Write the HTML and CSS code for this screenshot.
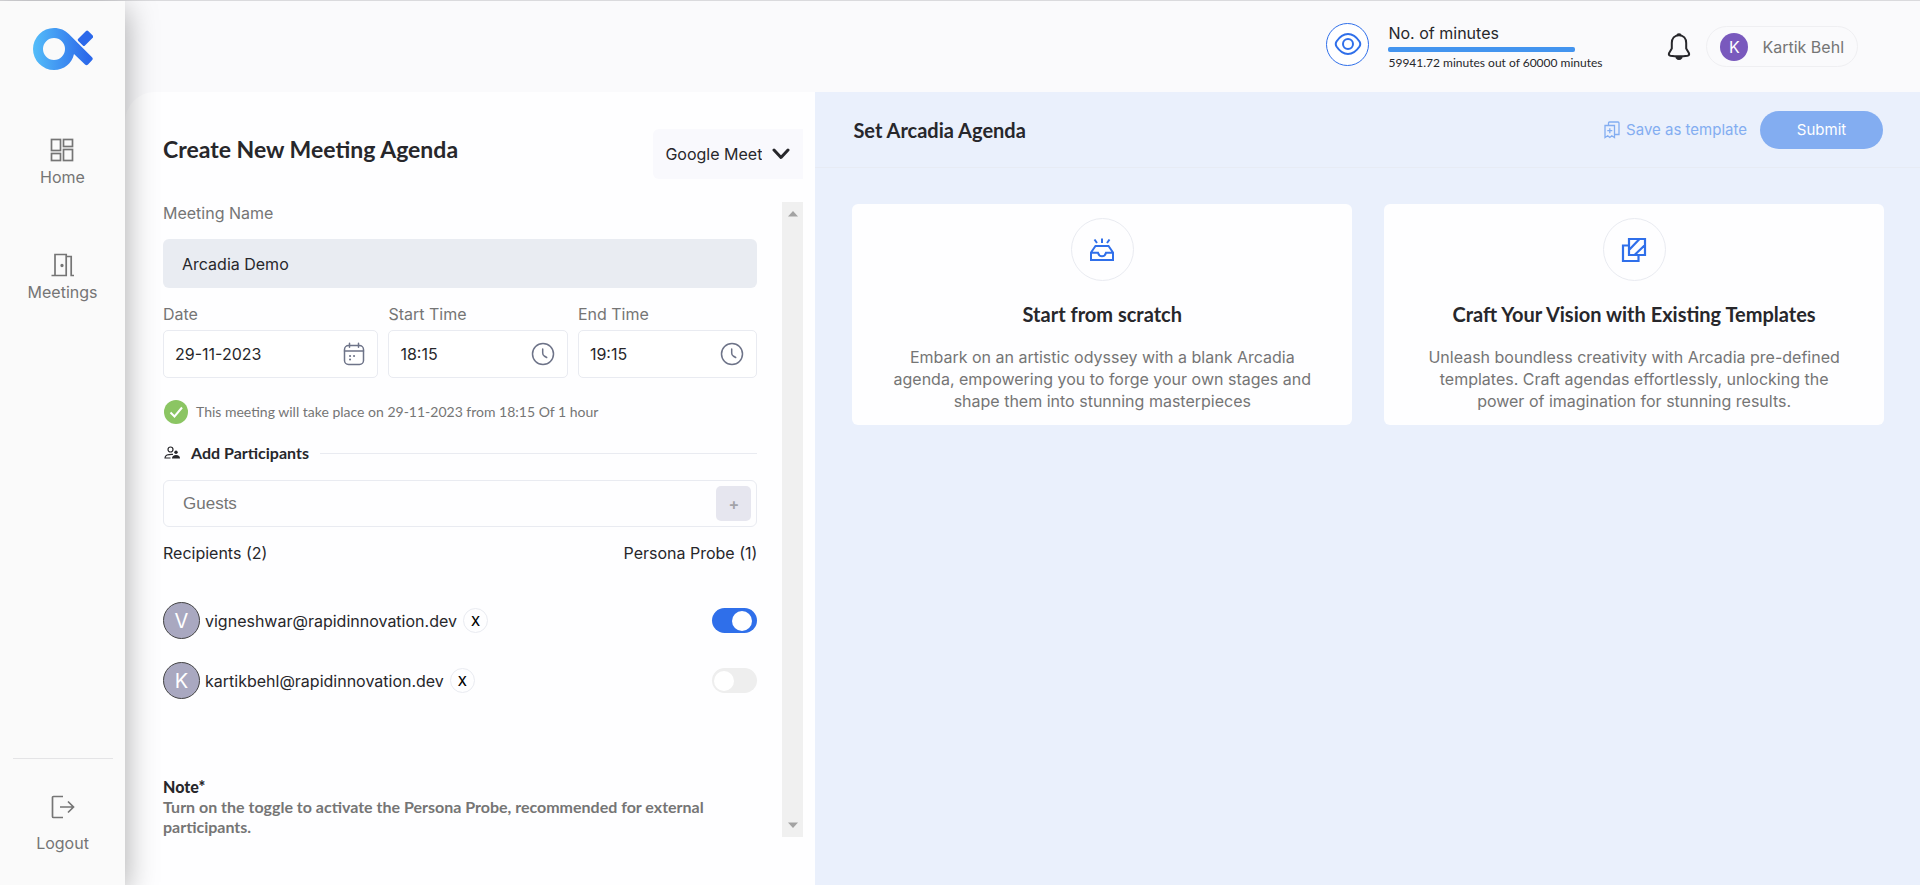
FILE: index.html
```html
<!DOCTYPE html>
<html lang="en">
<head>
<meta charset="utf-8">
<meta name="viewport" content="width=device-width, initial-scale=1">
<title>Create New Meeting Agenda</title>
<link rel="stylesheet" href="styles.css">
</head>
<body>
<div class="app">
  <nav class="sidebar" aria-label="Main">
    <a class="logo" href="#" aria-label="Arcadia">
      <svg width="60" height="42" viewBox="0 0 60 42">
        <defs>
          <linearGradient id="brand" gradientUnits="userSpaceOnUse" x1="0" y1="21" x2="56" y2="21">
            <stop offset="0" stop-color="#54bdf9"/><stop offset="1" stop-color="#2b68ea"/>
          </linearGradient>
        </defs>
        <path fill="url(#brand)" fill-rule="evenodd" d="M21 0c6.200 0 11 2.200 14.800 6L59 29.200q1.500 1.500 0 3l-4 4.200q-1.500 1.500-3 0L41 26C39 35.500 31 42 21 42A21 21 0 0 1 21 0zM21 10a11 11 0 1 0 0 22a11 11 0 0 0 0-22z"/>
        <rect x="45.500" y="5.500" width="14" height="9.500" rx="1.500" fill="#2b68ea" transform="rotate(-45 52.500 10.250)"/>
      </svg>
    </a>
    <a class="nav-item" href="#">
      <svg width="24" height="24" viewBox="0 0 24 24" fill="none" stroke="#757575" stroke-width="1.700">
        <rect x="1.500" y="1.500" width="9" height="11"/><rect x="13.500" y="1.500" width="9" height="7"/>
        <rect x="1.500" y="15.500" width="9" height="7"/><rect x="13.500" y="11.500" width="9" height="11"/>
      </svg>
      <span>Home</span>
    </a>
    <a class="nav-item" href="#">
      <svg width="24" height="24" viewBox="0 0 24 24" fill="none" stroke="#757575" stroke-width="1.700">
        <path d="M.5 22.500h14.700V1.500H4v21M15.200 3.500h5v19H23"/><circle cx="11" cy="12.500" r=".8" fill="#757575"/>
      </svg>
      <span>Meetings</span>
    </a>
    <div class="sidebar-foot">
      <a class="nav-item logout" href="#">
        <svg width="24" height="24" viewBox="0 0 24 24" fill="none" stroke="#757575" stroke-width="1.700">
          <path d="M12 1.500H2.500q-1 0-1 1v19q0 1 1 1H12M9 12h13.500M17 6.500l5.500 5.500-5.500 5.500"/>
        </svg>
        <span>Logout</span>
      </a>
    </div>
  </nav>

  <div class="main">
    <header class="topbar">
      <div class="usage">
        <span class="usage-icon">
          <svg width="28" height="28" viewBox="0 0 28 28" fill="none" stroke="#2f6fea" stroke-width="2">
            <path d="M2.500 11.500Q7.500 4 14 4t11.500 7.500q1.500 2.500 0 5Q20.500 24 14 24T2.500 16.500q-1.500-2.500 0-5z"/><circle cx="14" cy="14" r="5"/>
          </svg>
        </span>
        <div class="usage-text">
          <label class="usage-title" for="minutes">No. of minutes</label>
          <progress id="minutes" class="usage-bar" max="60000" value="59942"></progress>
          <span class="usage-detail">59941.72 minutes out of 60000 minutes</span>
        </div>
      </div>
      <button class="bell" type="button" aria-label="Notifications">
        <svg width="24" height="28" viewBox="0 0 24 28" fill="none" stroke="#27272b" stroke-width="2" stroke-linejoin="round">
          <path d="M12 2.200C7.500 2.200 4.800 5.600 4.800 10v5.500L2 20.300Q1.300 22.300 3.500 22.700Q12 24 20.500 22.700Q22.700 22.300 22 20.300L19.200 15.500V10C19.200 5.600 16.500 2.200 12 2.200z"/>
          <path d="M9.500 24.500q2.500 3 5 0z" fill="#27272b"/><path d="M10 2q2-1.500 4 0"/>
        </svg>
      </button>
      <button class="user" type="button"><span class="user-initial">K</span><span>Kartik Behl</span></button>
    </header>

    <div class="columns">
      <section class="meeting">
        <div class="meeting-head">
          <h1>Create New Meeting Agenda</h1>
          <div class="provider">
            <select aria-label="Meeting provider"><option>Google Meet</option></select>
            <svg width="18" height="12" viewBox="0 0 18 12" fill="none" stroke="#27272b" stroke-width="3" stroke-linecap="round" stroke-linejoin="round"><path d="M2 2l7 7.500L16 2"/></svg>
          </div>
        </div>
        <div class="meeting-body">
          <form class="form">
            <label class="label" for="name">Meeting Name</label>
            <input class="name-input" id="name" type="text" value="Arcadia Demo">
            <div class="when">
              <div class="field">
                <label class="label" for="date">Date</label>
                <div class="box date-box">
                  <input id="date" type="text" value="29-11-2023">
                  <svg width="22" height="24" viewBox="0 0 22 24" fill="none" stroke="#6d7388" stroke-width="1.500" stroke-linecap="round">
                    <rect x="1.500" y="3.500" width="19" height="19" rx="4"/><path d="M1.500 9h19M6.500 1.200v4M15.500 1.200v4"/><path stroke-width="2" d="M7 14h.1M11 14h.1M7 17.500h.1"/>
                  </svg>
                </div>
              </div>
              <div class="field">
                <label class="label" for="start">Start Time</label>
                <div class="box">
                  <input id="start" type="text" value="18:15">
                  <svg width="24" height="24" viewBox="0 0 24 24" fill="none" stroke="#6d7388" stroke-width="1.500" stroke-linecap="round"><circle cx="12" cy="12" r="10.500"/><path d="M11.700 7v4q0 2 1.500 3l2.500 1.500"/></svg>
                </div>
              </div>
              <div class="field">
                <label class="label" for="end">End Time</label>
                <div class="box">
                  <input id="end" type="text" value="19:15">
                  <svg width="24" height="24" viewBox="0 0 24 24" fill="none" stroke="#6d7388" stroke-width="1.500" stroke-linecap="round"><circle cx="12" cy="12" r="10.500"/><path d="M11.700 7v4q0 2 1.500 3l2.500 1.500"/></svg>
                </div>
              </div>
            </div>
            <p class="confirm">
              <svg width="24" height="24" viewBox="0 0 24 24"><circle cx="12" cy="12" r="12" fill="#8bc563"/><path d="M6.500 12.500l4 4 7.500-9" fill="none" stroke="#fff" stroke-width="2"/></svg>
              <span>This meeting will take place on 29-11-2023 from 18:15 Of 1 hour</span>
            </p>
            <h2 class="divider">
              <svg width="16" height="14" viewBox="0 0 16 14"><g fill="none" stroke="#27272b" stroke-width="1.200"><circle cx="6.500" cy="3.500" r="2.500"/><path d="M9 8.300Q1 8 1 12h5.500"/></g><circle cx="12" cy="6.300" r="1.700" fill="#27272b"/><path d="M8 12.600q0-3.600 4-3.600t4 3.600z" fill="#27272b"/></svg>
              <span>Add Participants</span>
            </h2>
            <div class="guests">
              <input type="text" placeholder="Guests" aria-label="Guests">
              <button type="button" aria-label="Add guest">+</button>
            </div>
            <div class="counts"><span>Recipients (2)</span><span>Persona Probe (1)</span></div>
            <ul class="people">
              <li>
                <span class="avatar">V</span><label for="probe-v">vigneshwar@rapidinnovation.dev</label>
                <button class="remove" type="button" aria-label="Remove vigneshwar">X</button>
                <input class="toggle" id="probe-v" type="checkbox" checked>
              </li>
              <li>
                <span class="avatar">K</span><label for="probe-k">kartikbehl@rapidinnovation.dev</label>
                <button class="remove" type="button" aria-label="Remove kartikbehl">X</button>
                <input class="toggle" id="probe-k" type="checkbox">
              </li>
            </ul>
            <p class="note"><strong>Note*</strong>Turn on the toggle to activate the Persona Probe, recommended for external participants.</p>
          </form>
          <div class="scrollbar" aria-hidden="true">
            <svg width="10" height="6" viewBox="0 0 10 6"><path fill="#a3a3a3" d="M0 5.500L5 0l5 5.500z"/></svg>
            <svg width="10" height="6" viewBox="0 0 10 6"><path fill="#a3a3a3" d="M0 .5L5 6l5-5.500z"/></svg>
          </div>
        </div>
      </section>

      <section class="agenda">
        <div class="agenda-head">
          <h2>Set Arcadia Agenda</h2>
          <button class="save" type="button">
            <svg width="16" height="18" viewBox="0 0 16 18" fill="none" stroke="#83adf1" stroke-width="1.300"><path d="M1 4.500h9.500v12L7.800 14.800 5.800 16.500 3.700 14.800 1 16.500zM4.500 4.500V2q0-1 1-1H14q1 0 1 1v11.500h-4.500M5.800 7.200v5M3.300 9.700h5"/></svg>
            <span>Save as template</span>
          </button>
          <button class="submit" type="button">Submit</button>
        </div>
        <div class="cards">
          <article class="card">
            <span class="card-icon">
              <svg width="26" height="24" viewBox="0 0 26 24" fill="none" stroke="#2f6fea" stroke-width="2"><path d="M2 14.500L6.500 8h13L24 14.500V22H2zM2 14.800h7q1 3.500 4 3.500t4-3.500h7M13 .5v4.500M5.500 1.500L8 5M20.500 1.500L18 5"/></svg>
            </span>
            <h3>Start from scratch</h3>
            <p>Embark on an artistic odyssey with a blank Arcadia agenda, empowering you to forge your own stages and shape them into stunning masterpieces</p>
          </article>
          <article class="card">
            <span class="card-icon">
              <svg width="26" height="26" viewBox="0 0 26 26" fill="none" stroke="#2f6fea" stroke-width="2.200"><path d="M8 8.500H2v15.500H17.500V18M8 2h16v16H8zM8 13L18.500 2M13.500 18L24 8"/></svg>
            </span>
            <h3>Craft Your Vision with Existing Templates</h3>
            <p>Unleash boundless creativity with Arcadia pre-defined templates. Craft agendas effortlessly, unlocking the power of imagination for stunning results.</p>
          </article>
        </div>
      </section>
    </div>
  </div>
</div>
</body>
</html>
```
FILE: styles.css
```css
:root {
  --ink: #27272b;
  --muted: #757575;
  --line: #e9ebf1;
  --blue: #2f6fea;
  --head: Lato, "Open Sans", sans-serif;
}
* { box-sizing: border-box; }
body {
  margin: 0;
  font: 16px/22px Inter, "Noto Sans", sans-serif;
  color: var(--ink);
}
h1, h2, h3, p, ul { margin: 0; padding: 0; }
input, select, button { font: inherit; color: inherit; border: 0; background: none; padding: 0; }
a { color: inherit; text-decoration: none; }
svg { display: block; flex: none; }

.app { display: flex; min-height: 100vh; border-top: 1px solid #dadadd; background: #fafafc; }

/* Sidebar */
.sidebar {
  position: relative;
  z-index: 1;
  flex: none;
  width: 125px;
  display: flex;
  flex-direction: column;
  align-items: center;
  background: #fafafa;
  box-shadow: 0 8px 30px rgba(0, 0, 0, .35);
  color: var(--muted);
}
.logo { padding-top: 27px; margin-bottom: 68px; }
.nav-item { display: flex; flex-direction: column; align-items: center; gap: 4px; margin-bottom: 65px; }
.sidebar-foot { margin-top: auto; width: 100px; border-top: 1px solid #e4e4e6; padding-top: 36px; }
.logout { gap: 13px; margin-bottom: 31px; }

/* Top bar */
.main { flex: 1; min-width: 0; display: flex; flex-direction: column; }
.topbar { height: 91px; display: flex; align-items: center; justify-content: flex-end; padding: 0 62px 0 20px; }
.usage { display: flex; align-items: center; gap: 19px; }
.usage-icon { width: 43px; height: 43px; border: 1px solid var(--blue); border-radius: 50%; display: grid; place-items: center; background: #fff; margin-bottom: 5px; }
.usage-text { display: flex; flex-direction: column; width: 220px; }
.usage-bar { appearance: none; width: 187px; height: 5px; margin: 3px 0; border: 0; border-radius: 2px; overflow: hidden; }
.usage-bar::-webkit-progress-bar { background: #dfe7f5; }
.usage-bar::-webkit-progress-value { background: #4394ef; }
.usage-detail { font: 12px/16px var(--head); white-space: nowrap; }
.bell { margin: 0 15px 0 59px; }
.user { height: 41px; display: flex; align-items: center; gap: 14px; padding: 0 13px; border: 1px solid #efeff2; border-radius: 21px; color: var(--muted); }
.user-initial { width: 28px; height: 28px; border-radius: 50%; background: #7959bd; color: #fff; display: grid; place-items: center; }

.columns { flex: 1; display: grid; grid-template-columns: 5fr 8fr; }

/* Meeting form */
.meeting { background: #fefeff; border-top-left-radius: 30px; padding: 37px 12px 48px 38px; display: flex; flex-direction: column; }
.meeting-head { display: flex; justify-content: space-between; align-items: flex-start; margin-bottom: 23px; }
h1 { font: 700 23px/40px var(--head); }
.provider { height: 50px; display: flex; align-items: center; gap: 10px; padding: 0 13px 0 12px; border-radius: 6px 0 0 6px; background: #f9f9fd; }
.provider select { appearance: none; }
.meeting-body { flex: 1; display: flex; gap: 25px; }
.form { flex: 1; min-width: 0; }
.label { display: block; color: var(--muted); }
.name-input { display: block; width: 100%; height: 49px; padding: 0 19px; margin: 15px 0; border-radius: 6px; background: #e9ecf2; }
.when { display: grid; grid-template-columns: 6fr 5fr 5fr; gap: 10px; }
.box { display: flex; align-items: center; height: 48px; margin-top: 5px; padding: 0 12px 0 11px; border: 1px solid var(--line); border-radius: 5px; background: #fff; }
.box input { flex: 1; min-width: 0; width: 0; }
.confirm { display: flex; align-items: center; gap: 8px; margin: 22px 0 19px; padding-left: 1px; font: 14px/24px var(--head); color: var(--muted); }
.divider { display: flex; align-items: center; gap: 11px; padding-left: 1px; font: 700 16px/20px var(--head); }
.divider::after { content: ""; flex: 1; height: 1px; background: var(--line); }
.guests { display: flex; align-items: center; height: 47px; margin: 17px 0 15px; padding: 0 5px 0 19px; border: 1px solid var(--line); border-radius: 6px; }
.guests input { flex: 1; font: 17px/22px "Liberation Sans", Arial, sans-serif; }
.guests input::placeholder { color: var(--muted); }
.guests button { width: 35px; height: 35px; border-radius: 5px; background: #e6e6ef; color: #a3a3a8; font-weight: 600; }
.counts { display: flex; justify-content: space-between; }
.people { list-style: none; margin-top: 38px; display: flex; flex-direction: column; gap: 23px; }
.people li { display: flex; align-items: center; }
.avatar { width: 37px; height: 37px; margin-right: 5px; border: 1px solid #444; border-radius: 50%; background: #a9a8c0; color: #fff; font-size: 20px; display: grid; place-items: center; }
.remove { width: 25px; height: 25px; margin-left: 6px; border: 1px solid var(--line); border-radius: 50%; color: #000; font: 500 13px/16px Inter, sans-serif; }
.toggle { appearance: none; margin: 0 0 0 auto; width: 45px; height: 25px; padding: 2px; border-radius: 13px; background: #eee; display: flex; align-items: center; }
.toggle::before { content: ""; width: 20px; height: 20px; border-radius: 50%; background: #fff; }
.toggle:checked { background: var(--blue); justify-content: flex-end; padding-right: 5px; }
.note { margin-top: 78px; font: 700 16px/20px var(--head); color: var(--muted); }
.note strong { display: block; color: var(--ink); }
.scrollbar { flex: none; width: 21px; padding: 9px 0; display: flex; flex-direction: column; align-items: center; justify-content: space-between; background: #f0f0f0; }

/* Agenda */
.agenda { background: #eaf0fc; }
.agenda-head { height: 76px; display: flex; align-items: center; padding: 0 37px 0 38px; border-bottom: 1px solid #e7ebf4; }
.agenda-head h2 { flex: 1; font: 700 20px/24px var(--head); }
.save { display: flex; align-items: center; gap: 6px; color: #83adf1; font-size: 15px; }
.submit { width: 123px; height: 38px; margin-left: 13px; border-radius: 19px; background: #83adf1; color: #fff; font-size: 15px; }
.cards { display: grid; grid-template-columns: 1fr 1fr; gap: 32px; padding: 36px 36px 36px 37px; }
.card { display: flex; flex-direction: column; align-items: center; padding: 14px 36px 13px; border-radius: 6px; background: #fefeff; text-align: center; }
.card-icon { width: 63px; height: 63px; border: 1px solid var(--line); border-radius: 50%; display: grid; place-items: center; }
.card h3 { margin: 21px 0 20px; font: 700 20px/24px var(--head); }
.card p { color: var(--muted); }
```
